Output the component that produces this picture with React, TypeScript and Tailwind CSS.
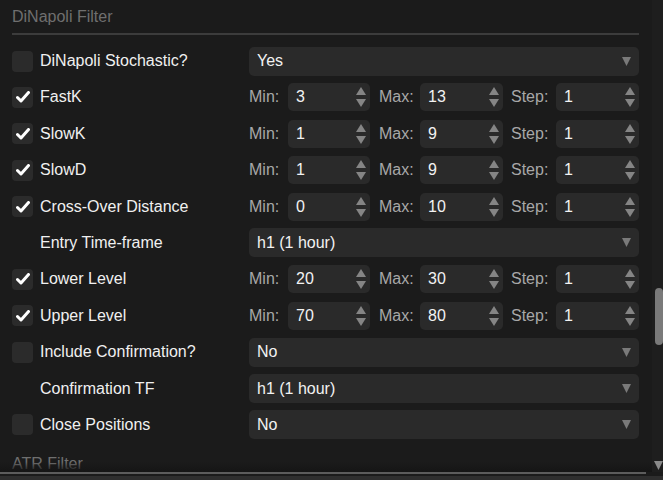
import React from "react";

type Row =
  | { kind: "select"; label: string; checkbox: boolean | null; value: string }
  | { kind: "range"; label: string; checkbox: boolean; min: string; max: string; step: string };

const rows: Row[] = [
  { kind: "select", label: "DiNapoli Stochastic?", checkbox: false, value: "Yes" },
  { kind: "range", label: "FastK", checkbox: true, min: "3", max: "13", step: "1" },
  { kind: "range", label: "SlowK", checkbox: true, min: "1", max: "9", step: "1" },
  { kind: "range", label: "SlowD", checkbox: true, min: "1", max: "9", step: "1" },
  { kind: "range", label: "Cross-Over Distance", checkbox: true, min: "0", max: "10", step: "1" },
  { kind: "select", label: "Entry Time-frame", checkbox: null, value: "h1 (1 hour)" },
  { kind: "range", label: "Lower Level", checkbox: true, min: "20", max: "30", step: "1" },
  { kind: "range", label: "Upper Level", checkbox: true, min: "70", max: "80", step: "1" },
  { kind: "select", label: "Include Confirmation?", checkbox: false, value: "No" },
  { kind: "select", label: "Confirmation TF", checkbox: null, value: "h1 (1 hour)" },
  { kind: "select", label: "Close Positions", checkbox: false, value: "No" },
];

const Checkbox = ({ checked }: { checked: boolean }) => (
  <div className="w-[21px] h-[21px] rounded-[4px] bg-[#2b2b2b] flex items-center justify-center">
    {checked && (
      <svg width="14" height="12" viewBox="0 0 14 12">
        <path d="M1.5 6.5 L5 10 L12.5 1.5" stroke="#ffffff" strokeWidth="3" fill="none" strokeLinecap="round" strokeLinejoin="round" />
      </svg>
    )}
  </div>
);

const Spinner = () => (
  <div className="flex flex-col gap-[4px] mr-[4px]">
    <svg width="10" height="8" viewBox="0 0 10 8">
      <path d="M5 0 L10 8 L0 8 Z" fill="#858585" />
    </svg>
    <svg width="10" height="8" viewBox="0 0 10 8">
      <path d="M0 0 L10 0 L5 8 Z" fill="#858585" />
    </svg>
  </div>
);

const NumInput = ({ value, w }: { value: string; w: string }) => (
  <div className={`${w} h-[28px] rounded-[5px] bg-[#2a2a2a] flex items-center justify-between pl-[8px]`}>
    <span className="text-[#f2f2f2] text-[16px]">{value}</span>
    <Spinner />
  </div>
);

const Select = ({ value }: { value: string }) => (
  <div className="w-[390px] h-[29px] rounded-[5px] bg-[#2a2a2a] flex items-center justify-between pl-[8px] pr-[8px]">
    <span className="text-[#f2f2f2] text-[16px]">{value}</span>
    <svg width="9" height="9" viewBox="0 0 9 9">
      <path d="M0 0 L9 0 L4.5 9 Z" fill="#7a7a7a" />
    </svg>
  </div>
);

const App = () => {
  return (
    <div
      className="w-[663px] h-[480px] bg-[#1b1b1b] flex flex-col overflow-hidden"
      style={{ fontFamily: '"Liberation Sans", Arial, sans-serif' }}
    >
      <div className="h-[472px] flex flex-row">
        {/* main panel */}
        <div className="w-[652px] h-full overflow-hidden relative">
          <div className="pl-[12px] pr-[13px] pt-[8px]">
            <div className="text-[16px] text-[#6f6f6f] leading-[18px]">DiNapoli Filter</div>
            <div className="h-[2px] bg-[#3c3c3c] mt-[7px]" />
            <div className="flex flex-col gap-[8.4px] mt-[12px]">
              {rows.map((row, index) => (
                <div key={index} className="h-[28px] flex flex-row items-center">
                  <div className="w-[237px] flex flex-row items-center">
                    <div className="w-[28px]">
                      {row.checkbox !== null && <Checkbox checked={row.checkbox} />}
                    </div>
                    <span className="text-[16px] text-[#f0f0f0]">{row.label}</span>
                  </div>
                  {row.kind === "select" ? (
                    <Select value={row.value} />
                  ) : (
                    <div className="flex flex-row items-center text-[16px] text-[#a8a8a8]">
                      <span className="w-[39px]">Min:</span>
                      <NumInput value={row.min} w="w-[82px]" />
                      <span className="w-[41px] ml-[9px]">Max:</span>
                      <NumInput value={row.max} w="w-[83px]" />
                      <span className="w-[45px] ml-[8px]">Step:</span>
                      <NumInput value={row.step} w="w-[83px]" />
                    </div>
                  )}
                </div>
              ))}
            </div>
            <div className="text-[16px] text-[#6f6f6f] leading-[18px] mt-[16px]">ATR Filter</div>
          </div>
          {/* bottom fade */}
          <div className="absolute left-0 right-0 bottom-0 h-[10px] bg-gradient-to-b from-transparent to-[#151515]" />
        </div>
        {/* vertical scrollbar */}
        <div className="w-[11px] h-full bg-[#1e1e1e] flex flex-col items-center">
          <div className="h-[288px]" />
          <div className="w-[8px] h-[57px] rounded-[4px] bg-[#7a7a7a] ml-[2px]" />
          <div className="flex-1" />
          <svg width="9" height="9" viewBox="0 0 9 9" className="mb-[2px] ml-[2px]">
            <path d="M0 0 L9 0 L4.5 9 Z" fill="#8a8a8a" />
          </svg>
        </div>
      </div>
      <div className="w-[646px] h-[2px] bg-[#5c5c5c]" />
      <div className="h-[2px] bg-[#1b1b1b]" />
      <div className="h-[4px] bg-[#2e2e2e]" />
    </div>
  );
};

export default App;
